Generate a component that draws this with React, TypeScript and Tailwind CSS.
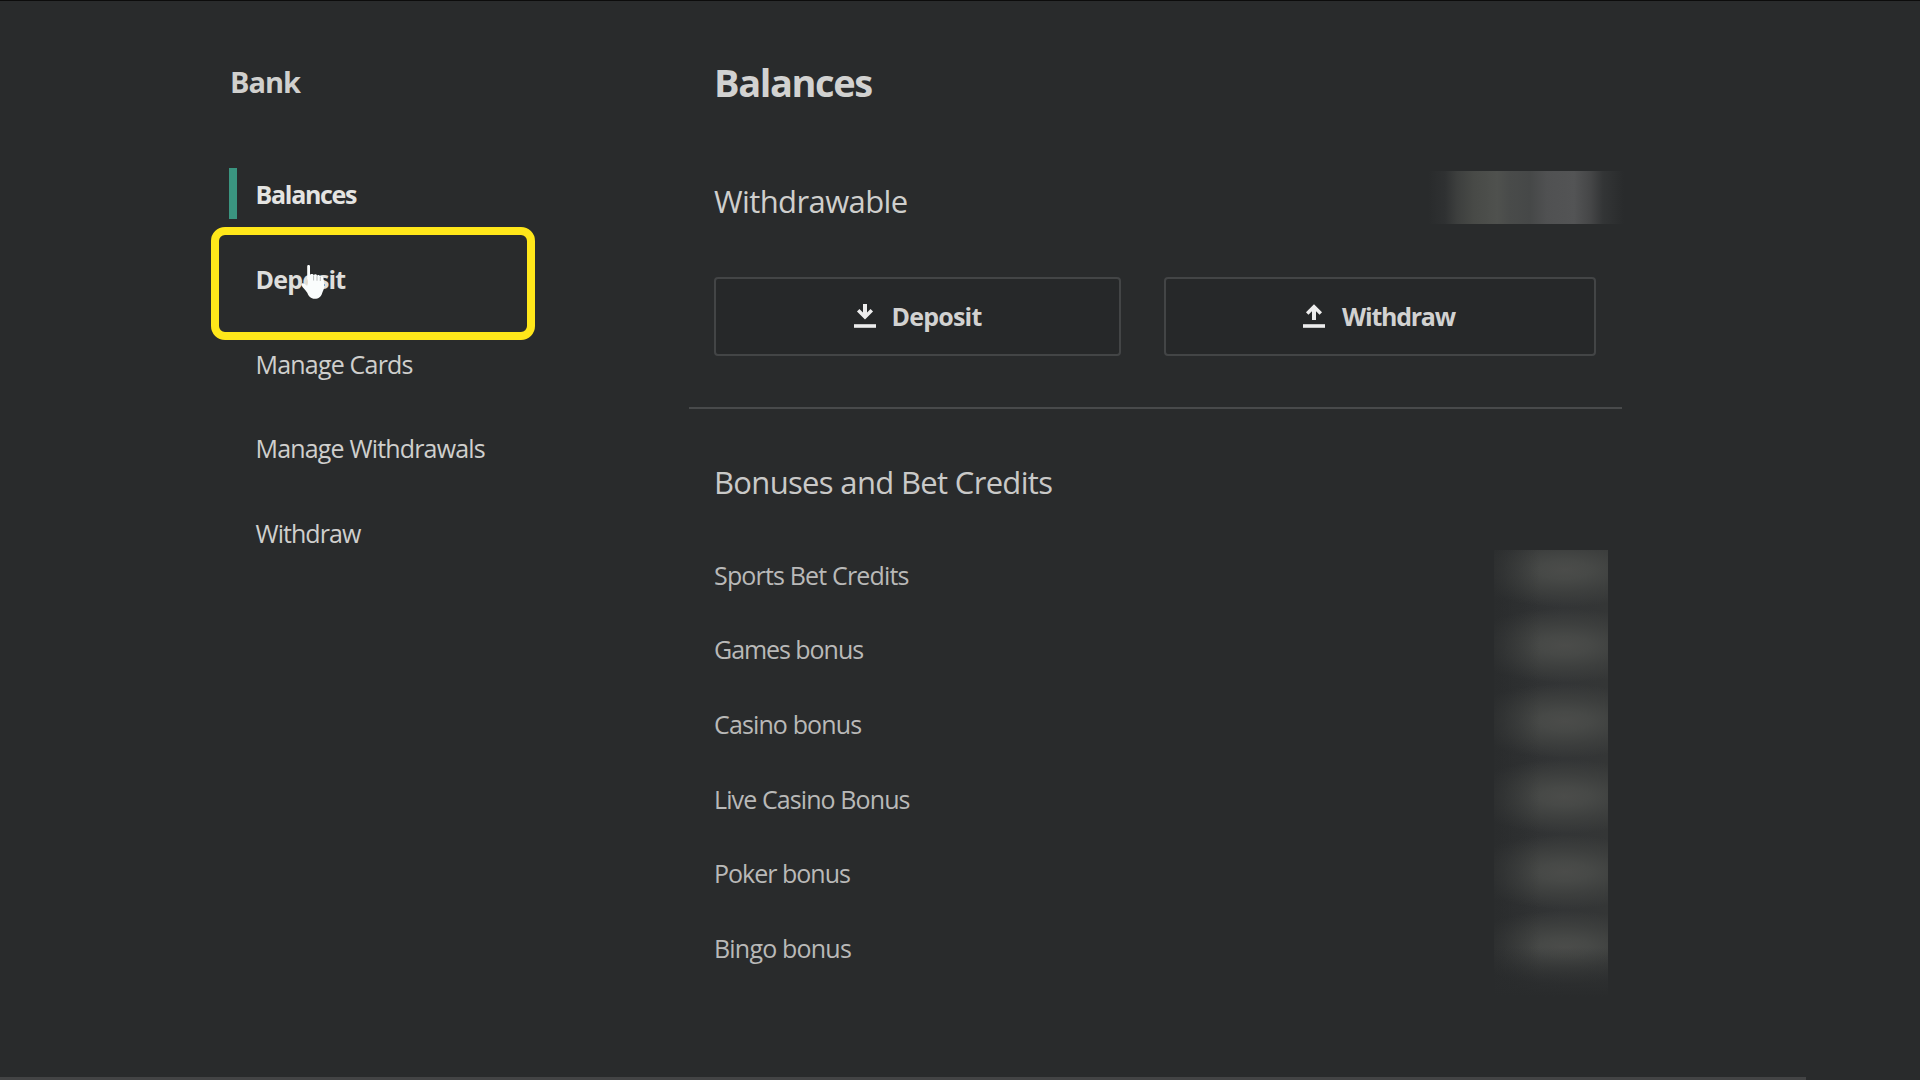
import clsx from 'clsx';

const NAV_ITEMS = [
  { label: 'Balances', className: 'font-bold text-[#e4e4e2] tracking-[-1.3px]', active: true },
  { label: 'Deposit', className: 'font-bold text-[#dededc] tracking-[-0.8px]', highlighted: true },
  { label: 'Manage Cards', className: 'tracking-[-0.8px]' },
  { label: 'Manage Withdrawals', className: 'tracking-[-0.83px]' },
  { label: 'Withdraw', className: 'tracking-[-0.95px]' },
];

const BONUSES = [
  { label: 'Sports Bet Credits', className: 'tracking-[-0.83px]' },
  { label: 'Games bonus', className: 'tracking-[-1.05px]' },
  { label: 'Casino bonus', className: 'tracking-[-0.87px]' },
  { label: 'Live Casino Bonus', className: 'tracking-[-0.9px]' },
  { label: 'Poker bonus', className: 'tracking-[-1px]' },
  { label: 'Bingo bonus', className: 'tracking-[-0.8px]' },
];

function DownloadIcon() {
  return (
    <svg className="-mt-0.5 h-6 w-[22px]" viewBox="0 0 22 24" fill="none" stroke="#ededed">
      <path d="M11 0v13" strokeWidth="4" />
      <path d="M4.200 6.300l6.800 6.700 6.800-6.700" strokeWidth="3.500" />
      <path d="M0 22h22" strokeWidth="3.600" />
    </svg>
  );
}

function UploadIcon() {
  return (
    <svg className="-mt-0.5 h-6 w-[22px]" viewBox="0 0 22 24" fill="none" stroke="#ededed">
      <path d="M11 3v13" strokeWidth="4" />
      <path d="M4.200 9.500l6.800-6.700 6.800 6.700" strokeWidth="3.500" />
      <path d="M0 22h22" strokeWidth="3.600" />
    </svg>
  );
}

function HandCursor() {
  return (
    <svg className="absolute top-[28px] left-[72px] h-[36px] w-[26px]" viewBox="0 0 26 36">
      <path
        d="M6.200 2.200C6.200.6 9 .6 9 2.200V11c.4-1.500 3.400-1.500 3.800.2.500-1.300 3-1.200 3.200.6.6-1.100 3-.9 3.100.9.7-1 3.400-.6 3.400 1.500 0 2.800 1.500 6.600.4 10.300-.5 2-1.300 3.300-1.800 4.700-.9 3.400-3.400 5.600-7.300 5.600-4 0-6.300-2.600-7.400-5.800C4.900 26 1.700 23.800.5 21.200c-.7-1.700 1.600-2.600 3-1.400l2.700 2.300z"
        fill="#fafdfd"
      />
      <path d="M12.600 11.500v5M16 12.200v4.500M19.300 13v4" stroke="#9a9c9c" strokeWidth=".7" />
    </svg>
  );
}

function Sidebar() {
  return (
    <aside className="w-[689px] shrink-0 pl-[229px]">
      <h2 className="pl-px text-[29px] leading-[50px] font-bold tracking-[-1px] text-[#d0d0ce]">Bank</h2>
      <nav className="mt-[44px]">
        {NAV_ITEMS.map((item) => (
          <div className="relative flex h-[84.7px] items-center" key={item.label}>
            <span className={clsx('h-[51px] w-[7.5px]', item.active && 'bg-[#3a9580]')} />
            <a className={clsx('ml-[19px] pt-0.5 leading-10', item.className)}>{item.label}</a>
            {item.highlighted ? (
              <>
                <div className="absolute top-[-9px] left-[-18px] h-[113px] w-[324px] rounded-[14px] border-8 border-[#ffe71a]" />
                <HandCursor />
              </>
            ) : null}
          </div>
        ))}
      </nav>
    </aside>
  );
}

function HiddenBalance() {
  return (
    <div className="h-[53px] w-[208px] bg-[linear-gradient(90deg,#292b2c_4%,#2f3132_12%,#3d3f3e_18%,#484a47_26%,#4f514e_37%,#494b4a_43%,#464848_53%,#505152_61%,#535455_74%,#454647_82%,#333536_88%,#292b2c_98%)]" />
  );
}

function HiddenBonusValues() {
  return (
    <div className="absolute top-[13px] right-[14px] h-[447px] w-[114px] overflow-hidden bg-[linear-gradient(90deg,#2d2f30,#333536_60%,#343636)]">
      <div className="-mt-[18px]">
        {BONUSES.map(({ label }) => (
          <div
            className="h-[75.5px] bg-[radial-gradient(100px_37px_at_62%_50%,#4b4c4a_0%,#474947_25%,#3d3f3e_60%,transparent_100%)]"
            key={label}
          />
        ))}
      </div>
      <div className="absolute inset-0 bg-[linear-gradient(90deg,#292b2c_0%,transparent_40%)] opacity-70" />
      <div className="absolute inset-x-0 bottom-0 h-[50px] bg-linear-to-b from-transparent to-[#292b2c]" />
    </div>
  );
}

export default function App() {
  return (
    <div className="flex h-[1080px] w-[1920px] flex-col overflow-hidden bg-[#292b2c] font-['Open_Sans','Noto_Sans',sans-serif] text-[25px] text-[#cfcfcd]">
      <div className="h-px shrink-0 bg-[#0c0c0c]" />
      <div className="flex grow pt-[56px]">
        <Sidebar />
        <main className="w-[933px]">
          <h1 className="pl-[25px] text-[38px] leading-[50px] font-bold tracking-[-1.4px] text-[#d2d2d1]">Balances</h1>

          <section className="border-b-2 border-[#484a4b] pb-[51px]">
            <div className="mt-[64px] -mr-1.5 flex h-[53px] items-center justify-between pl-[25px]">
              <h3 className="pt-1.5 text-[31px] leading-10 tracking-[-0.6px]">Withdrawable</h3>
              <HiddenBalance />
            </div>
            <div className="mt-[53px] flex gap-[43px] pl-[25px] text-[#d2d2d1]">
              <button className="flex h-[79px] w-[407px] items-center justify-center gap-4 rounded-[4px] border-2 border-[#434546] bg-[#262829] font-bold tracking-[-0.8px]">
                <DownloadIcon />
                <span>Deposit</span>
              </button>
              <button className="flex h-[79px] w-[432px] items-center justify-center gap-[17px] rounded-[4px] border-2 border-[#434546] bg-[#262829] pr-0.5 font-bold tracking-[-1.25px]">
                <UploadIcon />
                <span>Withdraw</span>
              </button>
            </div>
          </section>

          <section className="pl-[25px]">
            <h3 className="pt-[53px] text-[31px] leading-10 tracking-[-0.67px] text-[#c9c9c8]">
              Bonuses and Bet Credits
            </h3>
            <div className="relative mt-[35px] text-[#b9b9b8]">
              {BONUSES.map(({ label, className }) => (
                <div className={clsx('flex h-[74.7px] items-center pt-0.5', className)} key={label}>
                  {label}
                </div>
              ))}
              <HiddenBonusValues />
            </div>
          </section>
        </main>
      </div>
      <div className="h-[3px] w-[1806px] shrink-0 bg-[#434445]" />
    </div>
  );
}
